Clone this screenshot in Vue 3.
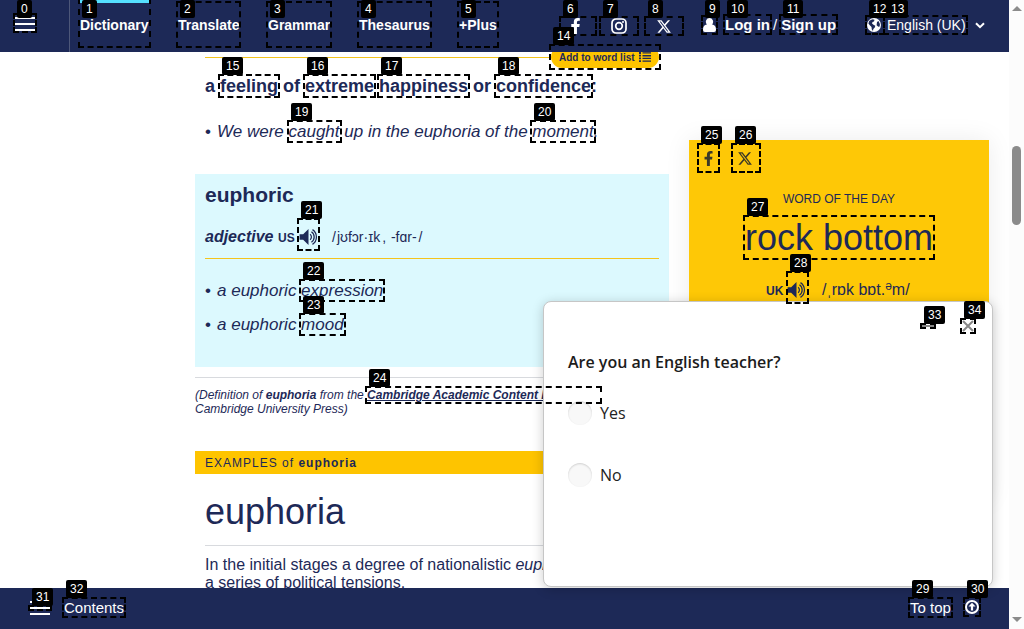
<script setup>
const nav = [
  { text: 'Dictionary', cls: 'n1', active: true },
  { text: 'Translate', cls: 'n2' },
  { text: 'Grammar', cls: 'n3' },
  { text: 'Thesaurus', cls: 'n4' },
  { text: '+Plus', cls: 'n5' },
]

// Link hints: left, top, right, bottom
const hints = [
  [13, 13, 37, 33], [78, -2, 151, 48], [176, 1, 241, 48], [266, 1, 332, 48],
  [357, 1, 432, 48], [457, 1, 499, 48], [559, 16, 597, 36], [599, 16, 639, 36],
  [644, 16, 684, 36], [701, 15, 718, 35], [723, 14, 772, 35], [779, 14, 838, 35],
  [865, 15, 885, 35], [883, 15, 968, 35], [549, 44, 661, 70], [218, 74, 280, 98],
  [303, 74, 376, 98], [377, 74, 470, 98], [494, 74, 593, 98], [287, 120, 342, 143],
  [530, 120, 596, 143], [297, 218, 320, 251], [299, 279, 385, 302], [299, 313, 346, 336],
  [365, 386, 602, 404], [697, 143, 720, 173], [731, 143, 761, 173], [743, 215, 935, 260],
  [786, 271, 809, 304], [908, 597, 953, 618], [963, 597, 981, 617], [28, 605, 52, 611],
  [62, 597, 126, 618], [920, 323, 936, 329], [960, 318, 976, 334],
]
const boxStyle = ([l, t, r, b]) => ({ left: l + 'px', top: t + 'px', width: r - l + 'px', height: b - t + 'px' })
const tagStyle = ([l, t]) => ({ left: l + 4 + 'px', top: Math.max(0, t - 17) + 'px' })

const fb = 'M279.14 288l14.22-92.66h-88.91v-60.13c0-25.35 12.42-50.06 52.24-50.06h40.42V6.26S260.43 0 225.36 0c-73.22 0-121.08 44.38-121.08 124.72v70.62H22.89V288h81.39v224h100.17V288z'
const xlogo = 'M18.244 2.25h3.308l-7.227 8.26 8.502 11.24H16.17l-5.214-6.817L4.99 21.75H1.68l7.73-8.835L1.254 2.25H8.08l4.713 6.231zm-1.161 17.52h1.833L7.084 4.126H5.117z'
</script>

<template>
  <div class="page">
    <div class="view">
      <header class="top">
        <div class="menu"><span class="burger"><i /><i /><i /></span></div>
        <nav>
          <a v-for="n in nav" :key="n.text" :class="[n.cls, { active: n.active }]">{{ n.text }}</a>
        </nav>
        <div class="social">
          <svg class="s-fb" viewBox="22 0 272 512"><path :d="fb" /></svg>
          <svg class="s-ig" viewBox="0 0 16 16"><rect x="1" y="1" width="14" height="14" rx="4" /><circle cx="8" cy="8" r="3.3" /><circle class="dot" cx="12" cy="4" r="1" /></svg>
          <svg class="s-x" viewBox="1 2 22 20"><path :d="xlogo" /></svg>
        </div>
        <div class="account">
          <svg viewBox="0 0 13 14"><path d="M6.5 0a3.600 3.900 0 0 1 2.600 6.600C11.700 7 13 8.600 13 11.500 13 13.200 12.300 14 11 14H2C.7 14 0 13.200 0 11.500 0 8.600 1.300 7 3.900 6.600A3.600 3.900 0 0 1 6.500 0z" /></svg>
          <b>Log in</b><span>/</span><b>Sign up</b>
        </div>
        <div class="lang">
          <svg class="globe" viewBox="0 0 14 14"><circle cx="7" cy="7" r="7" /><path d="M2.300 2.700 5.500 1.300 7.500 1.800 7 3.500 5.500 4 5 5.500 6.500 6.800 8.300 7.800 7.800 9.500 6.300 11 6 13 4.800 11.500 4.500 9 2.800 7.300 1.400 5.500zM10 4l1.500-1 1.400 3-.2 2.500-1.400.3-1.700-1.600z" /></svg>
          <span>English (UK)</span>
          <svg class="chev" viewBox="0 0 10 7"><path d="M1 1.200 5 5.200 9 1.200" /></svg>
        </div>
      </header>

      <main>
        <article>
          <div class="rule-row">
            <button>Add to word list
              <svg viewBox="0 0 12 10"><path d="M0 0h2v2H0zM3.500.2H12v1.400H3.500zM0 2.800h2v1.800H0zM3.500 3h8.500v1.400H3.500zM0 5.500h2v1.800H0zM3.500 5.700H12v1.400H3.500zM0 8.200h2V10H0zM3.500 8.400H12v1.400H3.500z" /></svg>
            </button>
          </div>
          <h3 class="def">a feeling of extreme happiness or confidence:</h3>
          <p class="eg first"><span>•</span><em>We were caught up in the euphoria of the moment.</em></p>

          <section class="related">
            <h2>euphoric</h2>
            <div class="pos">
              <em>adjective</em><b>US</b>
              <svg class="vol" viewBox="0 0 20 18"><path d="M0 6h4l6-6v18l-6-6H0z" /><path class="wave" d="M11.800 6a3.800 3.800 0 0 1 0 6M13.300 3.200a7 7 0 0 1 0 11.600M14.500.7a10 10 0 0 1 0 16.600" /></svg>
              <span class="pron"><i>/</i>jʊfɔr·ɪk<i class="comma">,</i> -fɑr-<i class="end">/</i></span>
            </div>
            <p class="eg e1"><span>•</span><em>a euphoric expression</em></p>
            <p class="eg e2"><span>•</span><em>a euphoric mood</em></p>
          </section>

          <p class="source">(Definition of <b>euphoria</b> from the <a>Cambridge Academic Content Dictionary</a> © <br>Cambridge University Press)</p>
          <div class="bar">EXAMPLES of <b>euphoria</b></div>
          <h1>euphoria</h1>
          <p class="quote">In the initial stages a degree of nationalistic <em>euphoria</em> <br>a series of political tensions.</p>
        </article>

        <aside>
          <div class="share">
            <svg class="s-fb" viewBox="22 0 272 512"><path :d="fb" /></svg>
            <svg class="s-x" viewBox="1 2 22 20"><path :d="xlogo" /></svg>
          </div>
          <div class="wotd">WORD OF THE DAY</div>
          <div class="word">rock bottom</div>
          <div class="say">
            <b>UK</b>
            <svg class="vol" viewBox="0 0 20 18"><path d="M0 6h4l6-6v18l-6-6H0z" /><path class="wave" d="M11.800 6a3.800 3.800 0 0 1 0 6M13.300 3.200a7 7 0 0 1 0 11.600M14.500.7a10 10 0 0 1 0 16.600" /></svg>
            <span>/ˌrɒk bɒt.<sup>ə</sup>m/</span>
          </div>
        </aside>
      </main>

      <footer>
        <span class="burger"><i /><i /><i /></span>
        <span class="contents">Contents</span>
        <span class="totop">To top</span>
        <svg viewBox="0 0 14 14"><circle cx="7" cy="7" r="6" /><path d="M7 2.800 10.500 6.600H8.100V10.500H5.900V6.600H3.500z" /></svg>
      </footer>
    </div>

    <div class="scroll">
      <svg viewBox="0 0 10 5"><path d="M0 5 5 0l5 5z" /></svg>
      <div class="thumb" />
      <svg class="down" viewBox="0 0 10 5"><path d="M0 0l5 5 5-5z" /></svg>
    </div>

    <div class="survey">
      <div class="ctl">
        <svg class="min" viewBox="0 0 12 2"><path d="M0 1h12" /></svg>
        <svg class="close" viewBox="0 0 12 12"><path d="M1 1l10 10M11 1 1 11" /></svg>
      </div>
      <h4>Are you an English teacher?</h4>
      <label><i />Yes</label>
      <label><i />No</label>
    </div>

    <template v-for="(h, i) in hints" :key="i">
      <div class="hint" :style="boxStyle(h)" />
      <div class="tag" :style="tagStyle(h)">{{ i }}</div>
    </template>
  </div>
</template>

<style>
body { margin: 0; background: #fff; overflow: hidden; }
</style>

<style scoped>
* { box-sizing: border-box; }
.page { position: relative; display: flex; width: 1024px; height: 629px; overflow: hidden; font-family: "Liberation Sans", Arial, sans-serif; color: #1d2957; background: #fff; }
.view { width: 1009px; height: 629px; display: flex; flex-direction: column; }
h1, h2, h3, h4, p { margin: 0; }
svg { display: block; flex: none; fill: currentColor; }

.top { height: 52px; flex: none; display: flex; background: #1d2957; color: #fff; line-height: 50px; white-space: nowrap; }
.menu { width: 70px; flex: none; border-right: 1px solid #4d5779; padding: 17px 0 0 15px; }
.burger { display: flex; flex-direction: column; gap: 4px; width: 20px; }
.burger i { height: 2px; background: #fff; }
nav { display: flex; width: 501px; flex: none; padding-left: 10px; font-size: 14px; font-weight: bold; }
nav a { flex: none; height: 52px; }
.active { box-shadow: inset 0 3px #55e0ff; }
.n1 { width: 69px; margin-right: 29px; }
.n2 { width: 61px; margin-right: 29px; }
.n3 { width: 62px; margin-right: 29px; }
.n4 { width: 71px; margin-right: 29px; }
.social { display: flex; align-items: center; height: 52px; width: 132px; flex: none; }
.social .s-fb { width: 9px; height: 16px; margin-right: 31px; }
.social .s-ig { width: 16px; height: 16px; margin-right: 30px; }
.s-ig rect, .s-ig circle { fill: none; stroke: #fff; stroke-width: 1.7; }
.s-ig .dot { fill: #fff; stroke: none; }
.social .s-x { width: 14px; height: 13px; }
.account { display: flex; width: 164px; flex: none; font-size: 15px; }
.account svg { width: 13px; height: 14px; margin: 18px 9px 0 0; }
.account span { margin: 0 4px 0 3px; }
.lang { display: flex; font-size: 14px; }
.lang .globe { width: 14px; height: 14px; margin: 18px 6px 0 0; }
.globe path { fill: #1d2957; }
.chev { width: 10px; height: 7px; margin: 22px 0 0 9px; }
.chev path { fill: none; stroke: #fff; stroke-width: 2; }

main { flex: 1; min-height: 0; overflow: hidden; display: flex; align-items: flex-start; padding-left: 195px; }
article { width: 474px; flex: none; }
.rule-row { height: 6px; margin: 0 10px; border-bottom: 1px solid #f4c41c; display: flex; justify-content: flex-end; align-items: flex-start; }
button { flex: none; width: 108px; height: 22px; margin-top: -6px; padding: 0 8px; border: 0; border-radius: 11px; background: #fec400; color: #1d2957; font: bold 10px "Liberation Sans", Arial, sans-serif; display: flex; align-items: center; justify-content: space-between; white-space: nowrap; }
button svg { width: 12px; height: 10px; }
.def { font-size: 18px; line-height: 22px; margin: 17px 0 0 10px; white-space: nowrap; }
.eg { display: flex; font-size: 17px; line-height: 20px; padding-left: 10px; white-space: nowrap; }
.eg span { width: 12px; }
.first { margin-top: 25px; }
.related { margin-top: 32px; height: 193px; background: #dcf9fe; padding-top: 9px; }
h2 { font-size: 21px; line-height: 24px; padding-left: 10px; }
.pos { display: flex; align-items: center; margin: 18px 10px 0; height: 34px; padding-bottom: 9px; border-bottom: 1px solid #f4c41c; font-size: 16px; white-space: nowrap; }
.pos em { font-weight: bold; width: 73px; }
.pos b { font-size: 12px; width: 21px; padding-top: 2px; }
.vol { width: 19px; height: 16px; }
.vol .wave { fill: none; stroke: currentColor; stroke-width: 1.400; }
.pron { margin-left: 14px; font-size: 14px; }
.pron i { font-style: normal; margin-right: 1px; }
.pron .comma { margin: 0 1px 0 2px; }
.pron .end { margin: 0 0 0 2px; }
.e1 { margin-top: 22px; }
.e2 { margin-top: 14px; }
.source { margin-top: 10px; padding-top: 10px; border-top: 1px solid #d8dade; font-size: 12px; line-height: 14px; font-style: italic; white-space: nowrap; }
.source a { font-weight: bold; text-decoration: underline; }
.bar { margin-top: 35px; height: 23px; line-height: 24px; background: #fec400; padding-left: 10px; font-size: 12px; letter-spacing: 1px; }
h1 { margin: 17px 10px 0; height: 55px; line-height: 42px; font-size: 36px; font-weight: normal; border-bottom: 1px solid #d8dade; }
.quote { margin: 10px 0 0 10px; font-size: 16px; line-height: 18px; white-space: nowrap; }

aside { width: 300px; height: 360px; flex: none; margin: 88px 0 0 20px; background: #fec806; box-shadow: 0 0 24px rgba(0,0,0,.08); text-align: center; }
.share { display: flex; align-items: center; height: 36px; padding-left: 15px; color: #3b3929; }
.share .s-fb { width: 9px; height: 15px; margin-right: 25px; }
.share .s-x { width: 14px; height: 13px; }
.wotd { margin-top: 15px; font-size: 12px; line-height: 16px; }
.word { margin-top: 10px; font-size: 36px; line-height: 42px; white-space: nowrap; }
.say { display: flex; align-items: center; margin: 21px 0 0 77px; height: 20px; font-size: 16px; white-space: nowrap; }
.say b { font-size: 12px; width: 21px; text-align: left; padding-top: 2px; }
.say .vol { margin-right: 16px; }
.say sup { font-size: 12px; line-height: 0; vertical-align: 5px; }

footer { height: 41px; flex: none; display: flex; background: #1d2957; color: #fff; font-size: 15px; line-height: 40px; padding-left: 30px; }
footer .burger { margin-top: 13px; }
.contents { margin-left: 14px; width: 846px; }
.totop { width: 55px; white-space: nowrap; }
footer svg { width: 14px; height: 14px; margin-top: 12px; }
footer circle { fill: none; stroke: #fff; stroke-width: 2; }

.scroll { width: 15px; height: 629px; flex: none; background: #fcfcfc; display: flex; flex-direction: column; align-items: center; color: #8b8b8b; }
.scroll svg { width: 10px; height: 5px; margin-top: 6px; }
.thumb { width: 9px; height: 79px; border-radius: 5px; background: #8b8b8b; margin-top: 135px; }
.scroll .down { margin-top: auto; margin-bottom: 7px; }

.survey { position: absolute; left: 543px; top: 301px; width: 450px; height: 286px; background: #fff; border: 1px solid #c6c6c6; border-radius: 8px; box-shadow: 0 2px 12px rgba(0,0,0,.2); padding-left: 24px; font-family: "Open Sans", "Noto Sans", sans-serif; color: #222; font-size: 16px; }
.ctl { display: flex; justify-content: flex-end; align-items: flex-start; height: 48px; padding: 18px 18px 0 0; gap: 28px; color: #888; }
.ctl path { fill: none; stroke: currentColor; stroke-width: 2; }
.min { width: 12px; height: 2px; margin-top: 5px; }
.close { width: 12px; height: 12px; }
h4 { font-size: 16px; font-weight: 600; line-height: 24px; color: #1c1c1c; }
label { display: flex; align-items: center; height: 24px; gap: 8px; margin-top: 27px; }
label + label { margin-top: 38px; }
label i { width: 24px; height: 24px; border-radius: 50%; background: #f8f8f8; box-shadow: inset 0 1px 2px rgba(0,0,0,.16); }

.hint { position: absolute; border: 2px dashed #000; }
.tag { position: absolute; height: 18px; padding: 2px 4px; border-radius: 2px; background: #000; color: #fff; font-size: 12px; line-height: 14px; }
</style>
